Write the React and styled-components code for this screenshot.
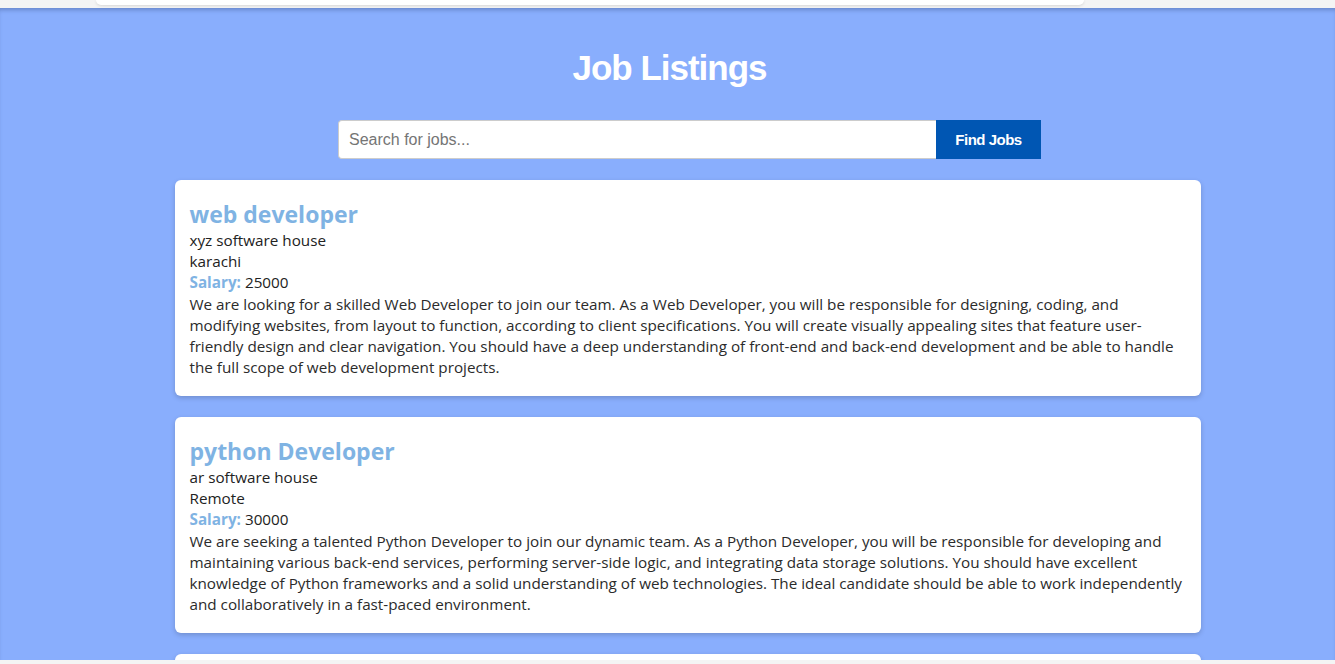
import React from "react";
import styled, { createGlobalStyle } from "styled-components";

const GlobalStyle = createGlobalStyle`
  * {
    box-sizing: border-box;
  }
  body {
    margin: 0;
    background-color: #f4f4f4;
    font-family: "Open Sans", "Noto Sans", sans-serif;
    overflow: hidden;
  }
`;

const TopStrip = styled.div`
  height: 8px;
  background-color: #f4f4f4;
  display: flex;
  padding-left: 96px;
`;

const NavEdge = styled.div`
  width: 988px;
  height: 5px;
  background-color: #fff;
  border-radius: 0 0 10px 10px;
  box-shadow: 0 1px 3px rgba(0, 0, 0, 0.12);
`;

const Section = styled.section`
  background-color: #89aefd;
  box-shadow: inset 0 4px 4px -2px rgba(40, 60, 110, 0.35);
  height: 652px;
  padding-top: 40px;
  overflow: hidden;
`;

const Heading = styled.h1`
  margin: 0 0 32px;
  text-align: center;
  color: #fff;
  font-family: "Liberation Sans", Arial, sans-serif;
  font-weight: 700;
  font-size: 35px;
  letter-spacing: -1px;
  line-height: 40px;
  padding-left: 4px;
`;

const Column = styled.div`
  max-width: 1066px;
  margin: 0 auto;
  padding-left: 40px;
`;

const SearchBar = styled.form`
  display: flex;
  width: 703px;
  margin: 0 auto 21px;
  padding-left: 4px;
  box-sizing: content-box;
`;

const SearchInput = styled.input`
  flex: 1;
  height: 39px;
  border: 1px solid #ccc;
  border-right: none;
  border-radius: 4px 0 0 4px;
  padding: 0 10px;
  font-family: "Liberation Sans", Arial, sans-serif;
  font-size: 16px;
  color: #333;
  outline: none;
  &::placeholder {
    color: #757575;
  }
`;

const SearchButton = styled.button`
  width: 105px;
  height: 39px;
  border: none;
  background-color: #0056b3;
  color: #fff;
  font-family: "Liberation Sans", Arial, sans-serif;
  font-weight: 700;
  font-size: 15px;
  letter-spacing: -0.5px;
  cursor: pointer;
`;

const Card = styled.article`
  background-color: #fff;
  border-radius: 6px;
  box-shadow: 0 2px 5px rgba(0, 0, 0, 0.18);
  padding: 19px 15px 18px;
  margin-bottom: 21px;
  color: #222;
  font-size: 15.25px;
  line-height: 21px;
`;

const Title = styled.h2`
  margin: 0 0 1px;
  color: #7fb3e3;
  font-size: 23px;
  line-height: 30px;
  font-weight: 700;
`;

const Line = styled.div`
  color: #222;
`;

const Label = styled.span`
  color: #7fb3e3;
  font-weight: 700;
`;

const Description = styled.p`
  margin: 1px 0 0;
  color: #2b2b2b;
`;

const jobs = [
  {
    title: "web developer",
    company: "xyz software house",
    location: "karachi",
    salary: "25000",
    description:
      "We are looking for a skilled Web Developer to join our team. As a Web Developer, you will be responsible for designing, coding, and modifying websites, from layout to function, according to client specifications. You will create visually appealing sites that feature user-friendly design and clear navigation. You should have a deep understanding of front-end and back-end development and be able to handle the full scope of web development projects.",
  },
  {
    title: "python Developer",
    company: "ar software house",
    location: "Remote",
    salary: "30000",
    description:
      "We are seeking a talented Python Developer to join our dynamic team. As a Python Developer, you will be responsible for developing and maintaining various back-end services, performing server-side logic, and integrating data storage solutions. You should have excellent knowledge of Python frameworks and a solid understanding of web technologies. The ideal candidate should be able to work independently and collaboratively in a fast-paced environment.",
  },
  {
    title: "frontend developer",
    company: "abc tech",
    location: "lahore",
    salary: "28000",
    description: "We are hiring a frontend developer.",
  },
];

function App() {
  return (
    <>
      <GlobalStyle />
      <TopStrip>
        <NavEdge />
      </TopStrip>
      <Section>
        <Heading>Job Listings</Heading>
        <Column>
          <SearchBar onSubmit={(e) => e.preventDefault()}>
            <SearchInput placeholder="Search for jobs..." />
            <SearchButton type="submit">Find Jobs</SearchButton>
          </SearchBar>
          {jobs.map((job) => (
            <Card key={job.title}>
              <Title>{job.title}</Title>
              <Line>{job.company}</Line>
              <Line>{job.location}</Line>
              <Line>
                <Label>Salary:</Label> {job.salary}
              </Line>
              <Description>{job.description}</Description>
            </Card>
          ))}
        </Column>
      </Section>
    </>
  );
}

export default App;
